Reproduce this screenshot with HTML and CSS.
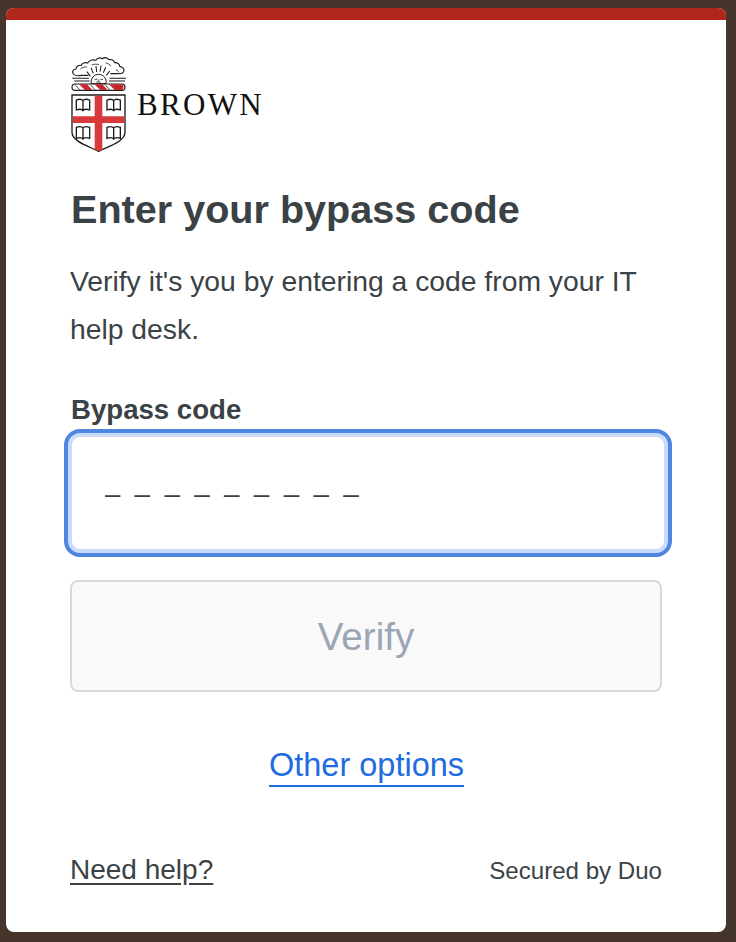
FILE: index.html
```html
<!DOCTYPE html>
<html lang="en">
<head>
<meta charset="utf-8">
<title>Enter your bypass code</title>
<link rel="stylesheet" href="styles.css">
</head>
<body>
<main class="card">
  <div class="card-bar"></div>
  <div class="card-body">
    <div class="logo">
      <svg class="crest" viewBox="30 20 165 285" aria-hidden="true">
        <path class="cloud" d="M38 72c-6-7-3-15 7-16 0-8 8-12 16-11 2-7 11-10 19-7 4-8 15-11 24-8 5-7 13-9 20-5 7-5 15-3 20 3 7-2 15 2 17 9 8-1 15 4 15 11 9 1 15 8 12 16-3 6-10 7-18 6H148M38 72c5 4 14 5 24 3h20" />
        <path class="thin" d="M58 56c6-5 13-7 20-6M92 44c8-3 15-3 22-1M134 38c8 1 13 5 16 10M164 58c5 2 8 4 10 8" />
        <path class="ray" d="M84 90C84 68 98 56 115 56s31 12 31 34Z" />
        <path class="thick" d="M88 78 78 64M97 69 90 52M107 65l-2-18M117 64l3-18M127 67l7-16M136 75l10-13" />
        <path class="face" d="M91 100c-3-16 8-28 22-28s25 12 22 28Z" />
        <path class="thin" d="M101 87h8M118 87h8M113 87v6M106 95h13" />
        <path class="thick" d="M34 84h50M146 84h50M40 92h46M144 92h48" />
        <path class="wreath" d="M42 101h142c10 0 11 19 0 19H42c-12 0-12-19 0-19Z" />
        <path class="wreath-red" d="M54 102h24l16 17H72ZM100 102h24l16 17h-22ZM144 102h36c9 0 10 13 3 17h-22Z" />
        <path class="thin" d="M42 103l14 15M88 103l14 15M132 103l14 15" />
        <path class="shield" d="M33 134H192V246C192 272 150 285 113 303 76 285 33 272 33 246Z" />
        <path class="cross" d="M101 136h23v62h66v20h-66v82l-11 2-12-4v-80H35v-20h66Z" />
        <g class="book">
          <path d="M46 149c8-3 17-2 20 2 3-4 12-5 20-2v30c-8-3-17-2-20 2-3-4-12-5-20-2ZM66 151v30" />
          <path d="M138 149c8-3 17-2 20 2 3-4 12-5 20-2v30c-8-3-17-2-20 2-3-4-12-5-20-2ZM158 151v30" />
          <path d="M46 231c8-3 17-2 20 2 3-4 12-5 20-2v33c-8-3-17-2-20 2-3-4-12-5-20-2ZM66 233v33" />
          <path d="M138 231c8-3 17-2 20 2 3-4 12-5 20-2v33c-8-3-17-2-20 2-3-4-12-5-20-2ZM158 233v33" />
        </g>
      </svg>
      <span class="wordmark">BROWN</span>
    </div>
    <h1 class="title">Enter your bypass code</h1>
    <p class="lead">Verify it's you by entering a code from your IT help desk.</p>
    <label class="field-label" for="code">Bypass code</label>
    <input class="code-input" id="code" type="text" placeholder="_ _ _ _ _ _ _ _ _">
    <button class="verify" type="button" disabled>Verify</button>
    <div class="options"><a class="options-link" href="#">Other options</a></div>
    <footer class="foot">
      <a class="help" href="#">Need help?</a>
      <span class="secured">Secured by Duo</span>
    </footer>
  </div>
</main>
</body>
</html>
```
FILE: styles.css
```css
* { box-sizing: border-box; }
html, body { height: 100%; }
body {
  margin: 0;
  padding: 8px 10px 10px 6px;
  background: #46352a;
  font-family: "Liberation Sans", Arial, sans-serif;
  color: #3a4246;
  overflow: hidden;
}
.card {
  height: 924px;
  background: #fff;
  border-radius: 8px;
  overflow: hidden;
  display: flex;
  flex-direction: column;
}
.card-bar { height: 12px; background: #b0271b; flex: none; }
.card-body {
  flex: 1;
  padding: 37px 64px 0 65px;
  display: flex;
  flex-direction: column;
}
.logo { display: flex; align-items: center; height: 95px; }
.crest { width: 55px; height: 95px; flex: none; }
.crest path { fill: none; stroke: #1c1c1c; }
.crest .thin { stroke-width: 2.4; }
.crest .thick { stroke-width: 3.2; }
.crest .cloud { fill: #fff; stroke-width: 3.4; }
.crest .ray { fill: #fff; stroke: none; }
.crest .face { fill: #fff; stroke-width: 3; }
.crest .wreath { fill: #fff; stroke-width: 3.4; }
.crest .wreath-red { fill: #c8282b; stroke: none; }
.crest .shield { fill: #fff; stroke-width: 4; }
.crest .cross { fill: #d83a3b; stroke: none; }
.crest .book path { fill: #fff; stroke-width: 4; }
.wordmark {
  margin: 0 0 1px 11px;
  font-family: "Liberation Serif", "Times New Roman", serif;
  font-size: 31px;
  letter-spacing: 2.3px;
  color: #111;
  line-height: 1;
}
.title {
  margin: 33px 0 0;
  font-size: 39.6px;
  font-weight: 700;
  line-height: 48px;
  color: #3a4246;
}
.lead {
  margin: 24px 0 0 -1px;
  font-size: 28.3px;
  line-height: 48px;
  max-width: 590px;
}
.field-label {
  margin-top: 39px;
  font-size: 27.6px;
  font-weight: 700;
  line-height: 36px;
}
.code-input {
  display: block;
  width: 600px;
  height: 120px;
  margin: 5px 0 0 -3px;
  padding: 0 0 22px 33px;
  border: 4px solid #c9ddfb;
  border-radius: 12px;
  outline: none;
  box-shadow: 0 0 0 4px #4f86e0;
  background: #fff;
  font-family: "Liberation Sans", Arial, sans-serif;
  font-size: 27px;
  letter-spacing: 3.65px;
  color: #3a4246;
}
.code-input::placeholder { color: #3a4246; opacity: 1; }
.verify {
  display: block;
  width: 592px;
  height: 112px;
  margin: 27px 0 0 -1px;
  padding: 2px 0 0;
  border: 2px solid #d5d9de;
  border-radius: 8px;
  background: #f9f9f9;
  color: #9aa6b4;
  font-family: "Liberation Sans", Arial, sans-serif;
  font-size: 38.6px;
}
.options { margin-top: 53px; text-align: center; line-height: 40px; }
.options-link {
  font-size: 32.5px;
  color: #1f6ce0;
  text-decoration: none;
  border-bottom: 2px solid #1f6ce0;
  padding-bottom: 2px;
}
.foot {
  margin-top: 63px;
  display: flex;
  justify-content: space-between;
  align-items: baseline;
}
.help { margin-left: -1px; font-size: 28px; color: #3a4246; text-decoration: underline; text-underline-offset: 4px; }
.secured { font-size: 24.1px; color: #3a4246; }
```
